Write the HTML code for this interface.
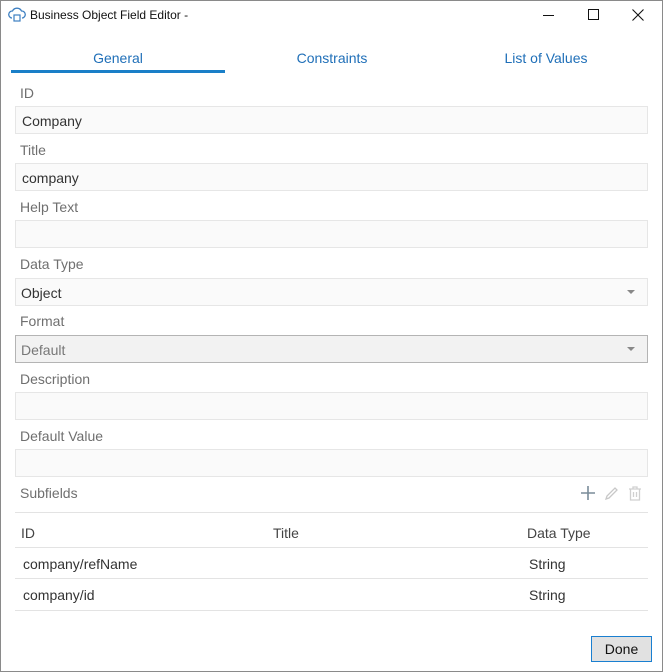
<!DOCTYPE html>
<html><head><style>
*{box-sizing:border-box;margin:0;padding:0}
body{width:663px;height:672px;background:#fff;font-family:"Liberation Sans",sans-serif;font-size:14px;position:relative;overflow:hidden}
.win{position:absolute;left:0;top:0;width:663px;height:672px;border:1px solid #8a8a8a}
.abs{position:absolute}
.lbl{position:absolute;left:20px;color:#6f6f6f;font-size:14px}
.fld{position:absolute;left:15px;width:633px;height:28px;background:#fafafa;border:1px solid #e6e6e6;color:#333;font-size:14px;padding:6px 0 0 6px}
.tab{position:absolute;top:50px;color:#1f6fb8;font-size:14px;text-align:center}
.hl{position:absolute;left:15px;width:633px;height:1px;background:#e3e3e3}
.arr{position:absolute;right:12px;top:11px;width:0;height:0;border-left:4px solid transparent;border-right:4px solid transparent;border-top:4px solid #888}
</style></head><body><div class="win"></div>
<svg class="abs" style="left:8px;top:7px" width="18" height="16" viewBox="0 0 18 16"><path d="M4 11 A3.5 3.5 0 0 1 4.5 4 A5 5 0 0 1 13.5 4 A3.5 3.5 0 0 1 14 11" fill="none" stroke="#3d7fc1" stroke-width="1.3"/><rect x="6" y="8" width="6" height="6" fill="none" stroke="#3d7fc1" stroke-width="1.2"/></svg>
<div class="abs" style="left:30px;top:8px;font-size:12px;color:#111">Business Object Field Editor -</div>
<div class="abs" style="left:543px;top:15px;width:11px;height:1px;background:#111"></div>
<div class="abs" style="left:588px;top:9px;width:11px;height:11px;border:1px solid #111"></div>
<svg class="abs" style="left:632px;top:9px" width="12" height="12"><path d="M0.5 0.5L11.5 11.5M11.5 0.5L0.5 11.5" stroke="#111" stroke-width="1.1"/></svg>
<div class="tab" style="left:11px;width:214px">General</div>
<div class="tab" style="left:225px;width:214px">Constraints</div>
<div class="tab" style="left:439px;width:214px">List of Values</div>
<div class="abs" style="left:11px;top:70px;width:214px;height:3px;background:#1a7fc8"></div>
<div class="lbl" style="top:85px">ID</div>
<div class="fld" style="top:106px">Company</div>
<div class="lbl" style="top:142px">Title</div>
<div class="fld" style="top:163px">company</div>
<div class="lbl" style="top:199px">Help Text</div>
<div class="fld" style="top:220px"></div>
<div class="lbl" style="top:256px">Data Type</div>
<div class="fld" style="top:278px;padding-left:5px">Object<div class="arr"></div></div>
<div class="lbl" style="top:313px">Format</div>
<div class="fld" style="top:335px;background:#f2f2f2;border-color:#b4b4b4;color:#777;padding-left:5px">Default<div class="arr"></div></div>
<div class="lbl" style="top:371px">Description</div>
<div class="fld" style="top:392px"></div>
<div class="lbl" style="top:428px">Default Value</div>
<div class="fld" style="top:449px"></div>
<div class="lbl" style="top:485px">Subfields</div>
<svg class="abs" style="left:580px;top:485px" width="16" height="16"><path d="M8 1V15M1 8H15" stroke="#7a8c99" stroke-width="1.6"/></svg>
<svg class="abs" style="left:604px;top:486px" width="15" height="15"><path d="M2 13L3 10L11 2L13 4L5 12Z" fill="none" stroke="#c8c8c8" stroke-width="1.3"/></svg>
<svg class="abs" style="left:628px;top:486px" width="14" height="15"><path d="M1 3H13M5 3V1H9V3M2.5 3V14H11.5V3M5.5 6V11M8.5 6V11" fill="none" stroke="#d0d0d0" stroke-width="1.3"/></svg>
<div class="hl" style="top:512px"></div>
<div class="abs" style="left:21px;top:525px;color:#444">ID</div>
<div class="abs" style="left:273px;top:525px;color:#444">Title</div>
<div class="abs" style="left:527px;top:525px;color:#444">Data Type</div>
<div class="hl" style="top:547px"></div>
<div class="abs" style="left:23px;top:556px;color:#333">company/refName</div>
<div class="abs" style="left:529px;top:556px;color:#333">String</div>
<div class="hl" style="top:578px"></div>
<div class="abs" style="left:23px;top:587px;color:#333">company/id</div>
<div class="abs" style="left:529px;top:587px;color:#333">String</div>
<div class="hl" style="top:610px"></div>
<div class="abs" style="left:591px;top:636px;width:61px;height:26px;border:1px solid #1a7fd0;background:#e1e1e1;color:#111;text-align:center;line-height:24px">Done</div>
</body></html>
